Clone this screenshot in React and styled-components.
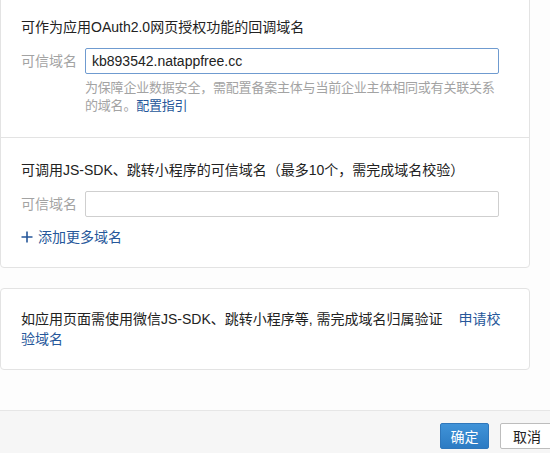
import React from "react";
import styled, { createGlobalStyle } from "styled-components";

const Global = createGlobalStyle`
  html, body { margin: 0; padding: 0; background: #fdfdfd; overflow: hidden; }
  body {
    font-family: "Liberation Sans", Arial, "Noto Sans CJK SC", sans-serif;
    font-size: 14px;
    color: #222;
    width: 550px;
    height: 453px;
  }
`;

const Page = styled.div`
  width: 550px;
  height: 453px;
  display: flex;
  flex-direction: column;
  overflow: hidden;
`;

const Main = styled.div`
  flex: 1;
  display: flex;
  flex-direction: column;
  gap: 20px;
  padding-right: 20px;
  margin-top: -6px;
`;

const Card = styled.div`
  background: #fff;
  border: 1px solid #e3e3e3;
  border-radius: 4px;
  display: flex;
  flex-direction: column;
`;

const Section = styled.div`
  padding: 22px 20px ${(p) => p.$pb || 20}px 20px;
  border-top: ${(p) => (p.$divided ? "1px solid #e3e3e3" : "none")};
  display: flex;
  flex-direction: column;
`;

const Title = styled.div`
  font-size: 14px;
  line-height: 20px;
  color: #222;
`;

const Row = styled.div`
  display: flex;
  align-items: center;
  gap: 8px;
  margin-top: 11px;
`;

const Label = styled.div`
  width: 56px;
  font-size: 14px;
  line-height: 20px;
  color: #a3a3a3;
  flex: none;
`;

const Input = styled.input`
  box-sizing: border-box;
  width: 414px;
  height: 26px;
  border: 1px solid ${(p) => (p.$focus ? "#6f9bd0" : "#cfcfcf")};
  border-radius: 2px;
  padding: 0 6px;
  font-family: "Liberation Sans", Arial, sans-serif;
  font-size: 14px;
  color: #222;
  outline: none;
  background: #fff;
`;

const Hint = styled.div`
  margin: 5px 0 0 64px;
  width: 414px;
  font-size: 13px;
  line-height: 18px;
  letter-spacing: -0.2px;
  color: #a3a3a3;
`;

const Link = styled.a`
  color: #26579a;
  text-decoration: none;
  cursor: pointer;
  margin-left: ${(p) => p.$ml || 0}px;
`;

const AddLink = styled.div`
  margin-top: 10px;
  display: flex;
  align-items: center;
  gap: 5px;
  color: #26579a;
  font-size: 14px;
  line-height: 20px;
`;

const Notice = styled.div`
  padding: 20px;
  font-size: 14px;
  line-height: 20px;
  color: #222;
`;

const Footer = styled.div`
  height: 43px;
  border-top: 1px solid #e6e6e6;
  background: #f6f6f6;
  display: flex;
  justify-content: flex-end;
  align-items: flex-start;
  gap: 11px;
  padding-top: 12px;
  margin-right: -4px;
  box-sizing: border-box;
`;

const Button = styled.button`
  box-sizing: border-box;
  height: 26px;
  width: ${(p) => (p.$primary ? 49 : 54)}px;
  border-radius: 2px;
  font-family: "Liberation Sans", Arial, "Noto Sans CJK SC", sans-serif;
  font-size: 14px;
  padding: 0;
  border: 1px solid ${(p) => (p.$primary ? "#2f77bb" : "#bdbdbd")};
  background: ${(p) =>
    p.$primary ? "linear-gradient(#4093d8, #2c7bc3)" : "#fff"};
  color: ${(p) => (p.$primary ? "#fff" : "#222")};
`;

const Plus = () => (
  <svg width="12" height="12" viewBox="0 0 12 12">
    <path d="M6 0.5V11.5M0.5 6H11.5" stroke="#26579a" strokeWidth="1.6" />
  </svg>
);

export default function App() {
  return (
    <Page>
      <Global />
      <Main>
        <Card>
          <Section $pb={22}>
            <Title>可作为应用OAuth2.0网页授权功能的回调域名</Title>
            <Row>
              <Label>可信域名</Label>
              <Input $focus defaultValue="kb893542.natappfree.cc" />
            </Row>
            <Hint>
              为保障企业数据安全，需配置备案主体与当前企业主体相同或有关联关系的域名。
              <Link>配置指引</Link>
            </Hint>
          </Section>
          <Section $divided>
            <Title>可调用JS-SDK、跳转小程序的可信域名（最多10个，需完成域名校验）</Title>
            <Row>
              <Label>可信域名</Label>
              <Input />
            </Row>
            <AddLink>
              <Plus />
              添加更多域名
            </AddLink>
          </Section>
        </Card>
        <Card>
          <Notice>
            如应用页面需使用微信JS-SDK、跳转小程序等, 需完成域名归属验证
            <Link $ml={16}>申请校验域名</Link>
          </Notice>
        </Card>
      </Main>
      <Footer>
        <Button $primary>确定</Button>
        <Button>取消</Button>
      </Footer>
    </Page>
  );
}
